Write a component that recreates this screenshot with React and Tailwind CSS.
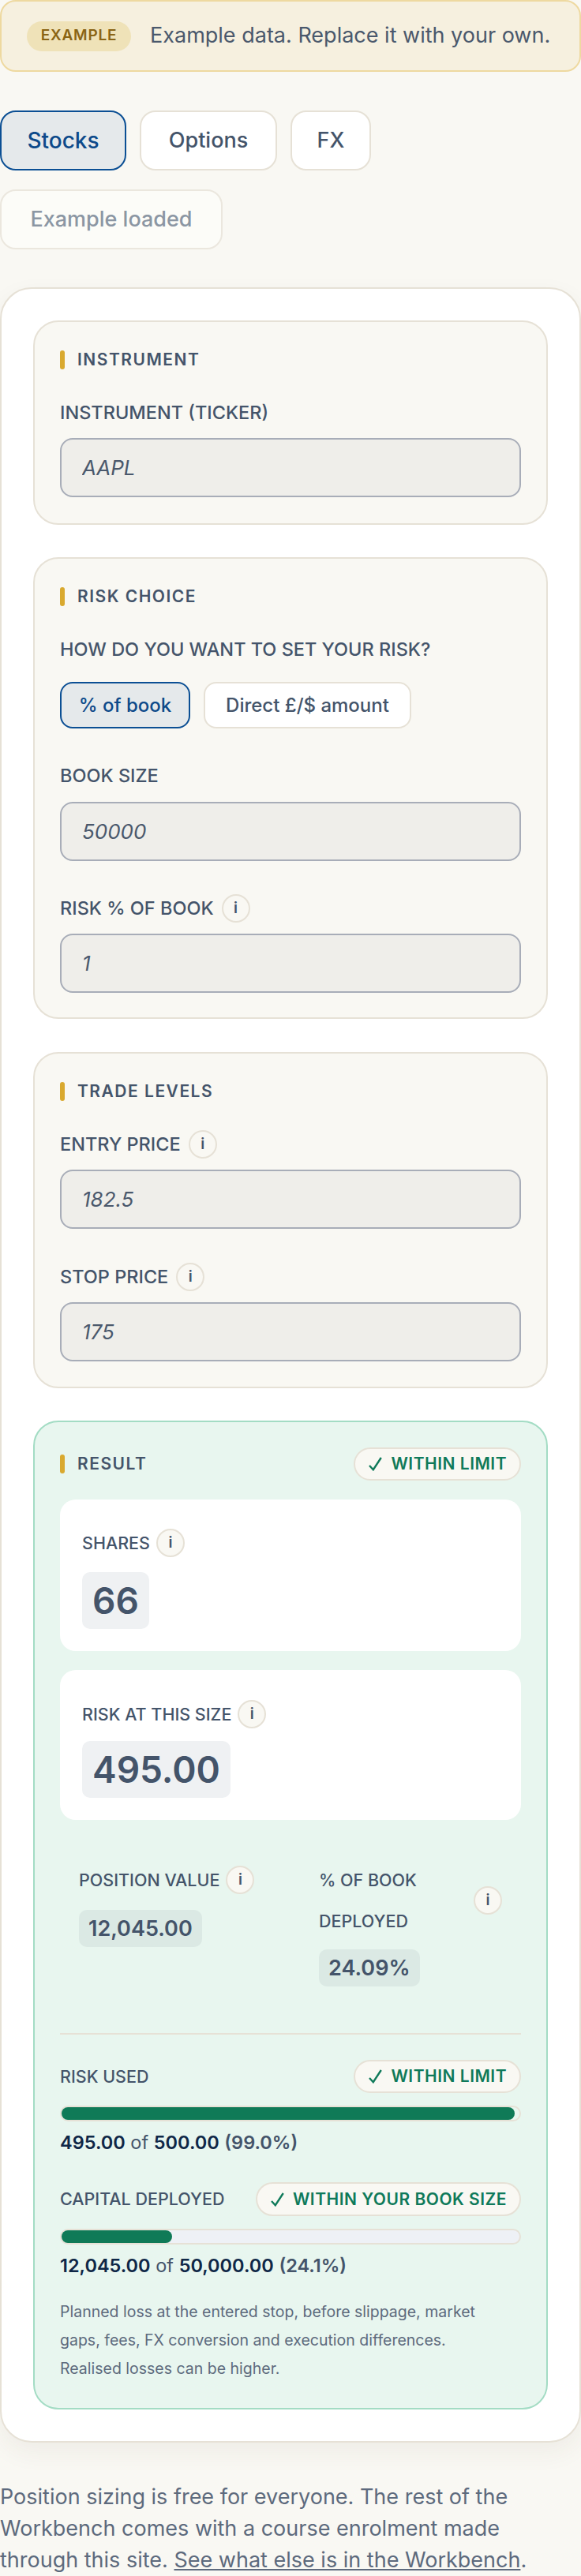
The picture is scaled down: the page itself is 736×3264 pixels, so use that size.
import React from "react";

const labelCls = "text-[23.5px] font-medium uppercase leading-none text-[#44546a]";
const statLabel = "text-[21.5px] font-medium uppercase text-[#44546a]";

function Info({ className = "" }) {
    return (
        <span className={`flex h-[36px] w-[36px] shrink-0 items-center justify-center rounded-full border-2 border-[#e6e1d6] bg-[#f9f8f3] text-[19px] font-semibold text-[#44546a] ${className}`}>
            i
        </span>
    );
}

function Head({ title }) {
    return (
        <div className="flex h-[24px] items-center">
            <span className="h-[24px] w-[6px] rounded-full bg-[#d9a92f]"></span>
            <span className="ml-[16px] text-[21px] font-semibold uppercase tracking-[1.5px] text-[#44546a]">{title}</span>
        </div>
    );
}

function Pill({ text, className = "h-[42px]" }) {
    return (
        <span className={`flex shrink-0 items-center gap-[11px] rounded-full border-2 border-[#e6e1d6] bg-[#f9f8f3] pr-[16px] pl-[17px] text-[21px] font-semibold uppercase tracking-[0.5px] text-[#0f7a5a] ${className}`}>
            <svg width="17" height="18" viewBox="0 0 17 18" fill="none" stroke="currentColor" strokeWidth="2.4">
                <path d="M1 11 L5.8 16.2 L15.8 1" />
            </svg>
            {text}
        </span>
    );
}

function Field({ label, value, info, gap = "mb-[15px]", className = "" }) {
    return (
        <div className={className}>
            <div className={`${gap} flex h-[34px] items-center gap-[10px]`}>
                <span className={labelCls}>{label}</span>
                {info && <Info />}
            </div>
            <input
                readOnly
                placeholder={value}
                className="block h-[75px] w-full rounded-[16px] border-2 border-[#a8adb8] bg-[#efeeea] px-[26px] text-[26px] italic text-[#44546a] outline-none placeholder:text-[#4a586c]"
            />
        </div>
    );
}

function Bar({ fill, track }) {
    return (
        <div className={`h-[20px] rounded-full border-2 border-[#e6e1d6] ${track}`}>
            <div className={`h-full rounded-full bg-[#0f7a57] ${fill}`}></div>
        </div>
    );
}

export default function App() {
    return (
        <div className="h-[3264px] w-[736px] overflow-hidden bg-[#f9f8f3] font-['Inter',sans-serif] text-[#44546a]">
            <div className="flex h-[91px] items-center gap-[24px] rounded-[20px] border-2 border-[#eed9a0] bg-[#f6f0df] px-[32px]">
                <span className="flex h-[38px] w-[132px] items-center justify-center rounded-full bg-[#efe2b8] text-[19px] font-semibold tracking-[0.8px] text-[#8a6414]">
                    EXAMPLE
                </span>
                <span className="whitespace-nowrap text-[27px] text-[#4a586c]">Example data. Replace it with your own.</span>
            </div>

            <div className="mt-[49px] flex flex-wrap gap-x-[17px] gap-y-[24px]">
                <button className="h-[76px] w-[160px] rounded-[20px] border-2 border-[#0b4f94] bg-[#e5e9eb] text-[28px] font-medium text-[#0d4a8a]">Stocks</button>
                <button className="h-[76px] w-[174px] rounded-[20px] border-2 border-[#e6e1d6] bg-white text-[27px] font-medium">Options</button>
                <button className="h-[76px] w-[102px] rounded-[20px] border-2 border-[#e6e1d6] bg-white text-[27px] font-medium">FX</button>
                <button className="h-[76px] w-[282px] rounded-[20px] border-2 border-[#ebe7de] bg-[#fcfcf8] text-[27px] font-medium text-[#8b96a3]">Example loaded</button>
            </div>

            <div className="mt-[48px] rounded-[40px] border-2 border-[#e6e1d6] bg-white p-[40px] shadow-[0_12px_32px_rgba(60,50,30,0.06)]">
                <section className="rounded-[32px] border-2 border-[#e6e1d6] bg-[#f9f8f3] px-[32px] pt-[36px] pb-[33px]">
                    <Head title="Instrument" />
                    <Field className="mt-[38px]" label="Instrument (ticker)" value="AAPL" />
                </section>

                <section className="mt-[41px] rounded-[32px] border-2 border-[#e6e1d6] bg-[#f9f8f3] px-[32px] pt-[36px] pb-[31px]">
                    <Head title="Risk choice" />
                    <div className="mt-[38px] flex h-[34px] items-center">
                        <span className={labelCls}>How do you want to set your risk?</span>
                    </div>
                    <div className="mt-[24px] flex gap-[17px]">
                        <button className="h-[59px] w-[165px] rounded-[16px] border-2 border-[#0b4f94] bg-[#e5e9eb] text-[24px] font-medium text-[#0d4a8a]">% of book</button>
                        <button className="h-[59px] w-[263px] rounded-[16px] border-2 border-[#e6e1d6] bg-white text-[24px] font-medium">Direct £/$ amount</button>
                    </div>
                    <Field className="mt-[43px]" gap="mb-[16px]" label="Book size" value="50000" />
                    <Field className="mt-[43px]" label="Risk % of book" value="1" info />
                </section>

                <section className="mt-[42px] rounded-[32px] border-2 border-[#e6e1d6] bg-[#f9f8f3] px-[32px] pt-[36px] pb-[32px]">
                    <Head title="Trade levels" />
                    <Field className="mt-[38px]" label="Entry price" value="182.5" info />
                    <Field className="mt-[44px]" label="Stop price" value="175" info />
                </section>

                <section className="mt-[41px] rounded-[32px] border-2 border-[#a3dcc4] bg-[#e8f6ef] px-[32px] pt-[32px] pb-[32px]">
                    <div className="flex h-[42px] items-center justify-between">
                        <Head title="Result" />
                        <Pill text="Within limit" />
                    </div>

                    <div className="mt-[24px] rounded-[20px] bg-white px-[28px] pt-[37px] pb-[28px]">
                        <div className="flex h-[36px] items-center gap-[8px]">
                            <span className={statLabel}>Shares</span>
                            <Info />
                        </div>
                        <div className="mt-[19px] w-fit rounded-[10px] bg-[#eff1f3] px-[13px] text-[46px] leading-[72px] font-semibold">66</div>
                    </div>

                    <div className="mt-[24px] rounded-[20px] bg-white px-[28px] pt-[38px] pb-[28px]">
                        <div className="flex h-[36px] items-center gap-[8px]">
                            <span className={statLabel}>Risk at this size</span>
                            <Info />
                        </div>
                        <div className="mt-[16px] w-fit rounded-[10px] bg-[#eff1f3] px-[13px] text-[46px] leading-[72px] font-semibold">495.00</div>
                    </div>

                    <div className="mt-[50px] flex gap-[72px] px-[24px]">
                        <div className="w-[232px]">
                            <div className="flex h-[52px] items-center gap-[8px]">
                                <span className={`${statLabel} whitespace-nowrap`}>Position value</span>
                                <Info />
                            </div>
                            <div className="mt-[12px] w-fit rounded-[10px] bg-[#dbe9e4] px-[12px] text-[27px] leading-[47px] font-semibold">12,045.00</div>
                        </div>
                        <div className="w-[232px]">
                            <div className="flex items-center justify-between">
                                <span className={`${statLabel} leading-[52px]`}>% of book<br />deployed</span>
                                <Info />
                            </div>
                            <div className="mt-[10px] w-fit rounded-[10px] bg-[#dbe9e4] px-[12px] text-[27px] leading-[47px] font-semibold">24.09%</div>
                        </div>
                    </div>

                    <div className="mt-[59px] border-t-2 border-[#e6e1d6]"></div>

                    <div className="mt-[32px] flex h-[42px] items-center justify-between">
                        <span className={statLabel}>Risk used</span>
                        <Pill text="Within limit" />
                    </div>
                    <div className="mt-[16px]"><Bar fill="w-[99%]" track="bg-[#e8f6ef]" /></div>
                    <p className="mt-[12px] text-[23.5px] leading-[30px]">
                        <b className="font-semibold text-[#0f2747]">495.00</b> of <b className="font-semibold text-[#0f2747]">500.00</b> <span className="font-semibold">(99.0%)</span>
                    </p>

                    <div className="mt-[35px] flex h-[43px] items-center justify-between">
                        <span className={statLabel}>Capital deployed</span>
                        <Pill text="Within your book size" className="h-[43px]" />
                    </div>
                    <div className="mt-[16px]"><Bar fill="w-[24.1%]" track="bg-[#eef1f6]" /></div>
                    <p className="mt-[12px] text-[23.5px] leading-[30px]">
                        <b className="font-semibold text-[#0f2747]">12,045.00</b> of <b className="font-semibold text-[#0f2747]">50,000.00</b> <span className="font-semibold">(24.1%)</span>
                    </p>

                    <p className="mt-[25px] text-[19.5px] leading-[36px] text-[#5d6a7d]">
                        Planned loss at the entered stop, before slippage, market<br />gaps, fees, FX conversion and execution differences.<br />Realised losses can be higher.
                    </p>
                </section>
            </div>

            <p className="mt-[49px] whitespace-nowrap text-[27px] leading-[40px] text-[#5d6a7d]">
                Position sizing is free for everyone. The rest of the<br />Workbench comes with a course enrolment made<br />through this site. <a className="underline">See what else is in the Workbench</a>.
            </p>
        </div>
    );
}
